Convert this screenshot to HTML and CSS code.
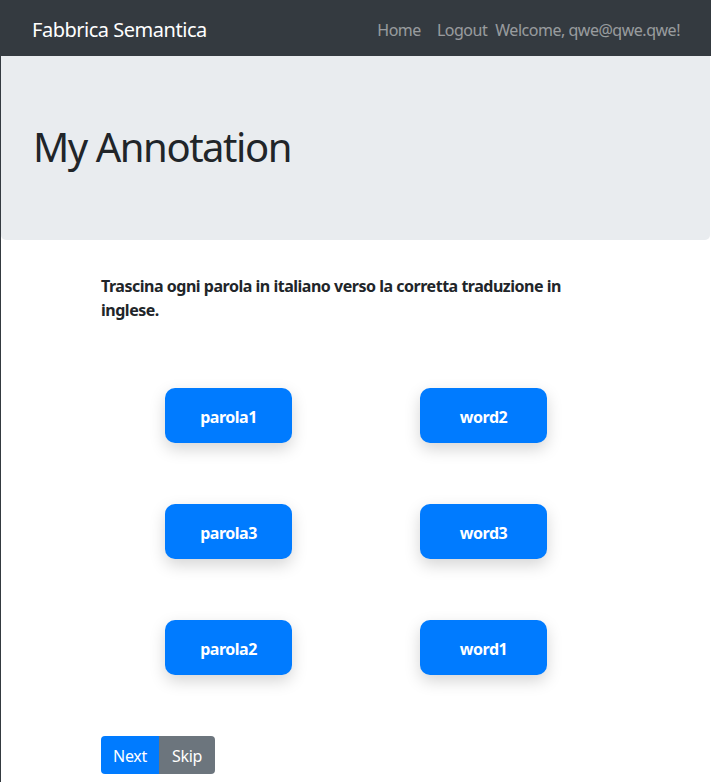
FILE: index.html
```html
<!DOCTYPE html>
<html lang="it">
<head>
<meta charset="utf-8">
<title>My Annotation</title>
<link rel="stylesheet" href="styles.css">
</head>
<body>
<div class="page">
  <nav class="navbar">
    <a class="brand" href="#">Fabbrica Semantica</a>
    <div class="nav-right">
      <a class="nav-link" href="#">Home</a>
      <a class="nav-link" href="#">Logout</a>
      <span class="nav-text">Welcome, qwe@qwe.qwe!</span>
    </div>
  </nav>
  <header class="jumbotron">
    <h1 class="title">My Annotation</h1>
  </header>
  <main class="container">
    <p class="instructions">Trascina ogni parola in italiano verso la corretta traduzione in inglese.</p>
    <div class="board">
      <div class="cell"><div class="word">parola1</div></div>
      <div class="cell"><div class="word">word2</div></div>
      <div class="cell"><div class="word">parola3</div></div>
      <div class="cell"><div class="word">word3</div></div>
      <div class="cell"><div class="word">parola2</div></div>
      <div class="cell"><div class="word">word1</div></div>
    </div>
    <div class="btn-group">
      <button class="btn btn-primary">Next</button>
      <button class="btn btn-secondary">Skip</button>
    </div>
  </main>
</div>
</body>
</html>
```

FILE: styles.css
```css
* { box-sizing: border-box; }
html, body { margin: 0; padding: 0; background: #fff; }
body {
  font-family: "Noto Sans", "Open Sans", "DejaVu Sans", sans-serif;
  font-size: 16px;
  line-height: 1.5;
  color: #212529;
  letter-spacing: -0.03em;
}
.page {
  border-left: 1px solid #343a40;
  min-height: 782px;
}
.navbar {
  background: #343a40;
  height: 56px;
  display: flex;
  align-items: center;
  justify-content: space-between;
  padding: 3px 31px 0 31px;
}
.brand {
  color: #fff;
  text-decoration: none;
  font-size: 20px;
  line-height: 30px;
}
.nav-right {
  display: flex;
  align-items: center;
}
.nav-link {
  color: rgba(255,255,255,.5);
  text-decoration: none;
  padding: 0 8px;
}
.nav-text {
  color: rgba(255,255,255,.5);
}
.jumbotron {
  background: #e9ecef;
  height: 184px;
  margin-right: 1px;
  border-radius: 0 0 5px 5px;
  padding: 67px 32px 0;
}
.title {
  margin: 0;
  font-size: 40px;
  line-height: 48px;
  font-weight: 400;
  letter-spacing: -1.45px;
}
.container {
  width: 540px;
  margin: 0 auto;
  padding: 34px 15px 0;
}
.instructions {
  margin: 0;
  font-weight: 700;
}
.board {
  display: grid;
  grid-template-columns: 1fr 1fr;
  row-gap: 61px;
  margin-top: 66px;
  justify-items: center;
}
.word {
  width: 127px;
  height: 55px;
  padding-top: 2px;
  background: #007bff;
  color: #fff;
  font-weight: 700;
  border-radius: 10px;
  display: flex;
  align-items: center;
  justify-content: center;
  box-shadow: 0 6px 16px rgba(0,0,0,.17);
}
.btn-group {
  display: flex;
  margin-top: 61px;
}
.btn {
  font-family: inherit;
  font-size: 16px;
  letter-spacing: -0.02em;
  line-height: 24px;
  padding: 8px 0 6px;
  border: 0;
  color: #fff;
  text-align: center;
}
.btn-primary {
  width: 58px;
  background: #007bff;
  border-radius: 4px 0 0 4px;
}
.btn-secondary {
  width: 56px;
  background: #6c757d;
  border-radius: 0 4px 4px 0;
}
```
